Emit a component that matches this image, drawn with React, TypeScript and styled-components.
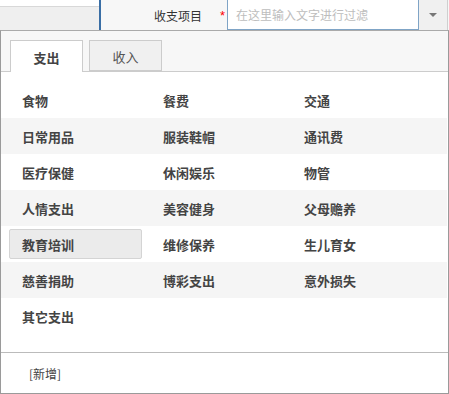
import styled, { createGlobalStyle } from 'styled-components';

const GlobalStyle = createGlobalStyle`
  html, body {
    margin: 0;
    padding: 0;
    background: #ffffff;
  }
  body {
    font-family: 'Noto Sans CJK SC', 'Noto Sans', sans-serif;
    color: #333;
  }
`;

const categories = [
  ['食物', '餐费', '交通'],
  ['日常用品', '服装鞋帽', '通讯费'],
  ['医疗保健', '休闲娱乐', '物管'],
  ['人情支出', '美容健身', '父母赡养'],
  ['教育培训', '维修保养', '生儿育女'],
  ['慈善捐助', '博彩支出', '意外损失'],
  ['其它支出'],
];

const selected = '教育培训';

export default function App() {
  return (
    <>
      <GlobalStyle />
      <Page>
        <TopBar>
          <LeftStub />
          <Divider />
          <FieldArea>
            <Label>收支项目</Label>
            <Required>*</Required>
            <FilterInput placeholder='在这里输入文字进行过滤' />
            <DropButton>
              <Caret />
            </DropButton>
          </FieldArea>
        </TopBar>
        <Popup>
          <TabBar>
            <Tab $active>支出</Tab>
            <Tab>收入</Tab>
          </TabBar>
          <Content>
            {categories.map((row, i) => (
              <Row key={i} $striped={i % 2 === 1}>
                {row.map((name) => (
                  <Item key={name} $selected={name === selected}>
                    {name}
                  </Item>
                ))}
              </Row>
            ))}
          </Content>
          <Footer>
            <AddLink>[新增]</AddLink>
          </Footer>
        </Popup>
      </Page>
    </>
  );
}

const Page = styled.div`
  width: 449px;
  height: 394px;
  overflow: hidden;
`;

const TopBar = styled.div`
  display: flex;
  height: 30px;
`;

const LeftStub = styled.div`
  width: 99px;
  margin-top: 6px;
  border-top: 1px solid #d8d8d8;
  background: #efefef;
`;

const Divider = styled.div`
  width: 2px;
  background: #3a6ea5;
`;

const FieldArea = styled.div`
  flex: 1;
  display: flex;
  align-items: stretch;
  padding-left: 53px;
  background: #f7f7f7;
`;

const Label = styled.span`
  display: flex;
  align-items: center;
  font-size: 12px;
  color: #333;
  margin-right: 18px;
`;

const Required = styled.span`
  display: flex;
  align-items: center;
  width: 7px;
  color: #ff0000;
  font-size: 13px;
  font-family: 'Liberation Sans', sans-serif;
`;

const FilterInput = styled.input`
  box-sizing: border-box;
  width: 192px;
  height: 30px;
  margin: 0;
  padding: 0 0 0 8px;
  border: 1px solid #7fa4c6;
  border-top: none;
  outline: none;
  background: #fff;
  font-family: 'Noto Sans CJK SC', sans-serif;
  font-size: 12px;
  color: #333;

  &::placeholder {
    color: #bdbdbd;
  }
`;

const DropButton = styled.div`
  box-sizing: border-box;
  width: 29px;
  height: 30px;
  display: flex;
  align-items: center;
  justify-content: center;
  background: #f0f0f0;
  border-right: 1px solid #cfcfcf;
`;

const Caret = styled.span`
  width: 0;
  height: 0;
  border-left: 4px solid transparent;
  border-right: 4px solid transparent;
  border-top: 4px solid #777;
`;

const Popup = styled.div`
  box-sizing: border-box;
  width: 449px;
  height: 364px;
  border: 1px solid #9a9a9a;
  border-top-color: #aaa;
  background: #fff;
`;

const TabBar = styled.div`
  display: flex;
  gap: 6px;
  height: 40px;
  padding: 9px 0 0 9px;
  box-sizing: border-box;
  height: 41px;
  background: #f7f7f7;
  border-bottom: 1px solid #cccccc;
`;

const Tab = styled.div<{ $active?: boolean }>`
  box-sizing: border-box;
  width: 73px;
  height: ${(p) => (p.$active ? '32px' : '31px')};
  border: 1px solid #cccccc;
  border-bottom: ${(p) => (p.$active ? 'none' : '1px solid #cccccc')};
  background: ${(p) => (p.$active ? '#ffffff' : '#f0f0f0')};
  display: flex;
  align-items: center;
  justify-content: center;
  padding-top: 2px;
  font-size: 13px;
  font-weight: ${(p) => (p.$active ? 700 : 400)};
  color: ${(p) => (p.$active ? '#444' : '#555')};
`;

const Content = styled.div`
  height: 280px;
  box-sizing: border-box;
  padding: 10px 1px 18px 0;
`;

const Row = styled.div<{ $striped: boolean }>`
  display: flex;
  height: 36px;
  box-sizing: border-box;
  padding: 3px 0 3px 4px;
  background: ${(p) => (p.$striped ? '#f5f5f5' : '#ffffff')};
`;

const Item = styled.div<{ $selected: boolean }>`
  box-sizing: border-box;
  width: 133px;
  height: 30px;
  margin: 0 4px;
  padding-left: 12px;
  display: flex;
  align-items: center;
  border: 1px solid ${(p) => (p.$selected ? '#d4d4d4' : 'transparent')};
  border-radius: 2px;
  background: ${(p) => (p.$selected ? '#ebebeb' : 'transparent')};
  font-size: 13px;
  font-weight: 700;
  color: #444;
`;

const Footer = styled.div`
  height: 41px;
  box-sizing: border-box;
  border-top: 1px solid #bbbbbb;
  display: flex;
  align-items: center;
  padding-left: 28px;
`;

const AddLink = styled.span`
  font-size: 12px;
  color: #444;
  cursor: pointer;
`;
